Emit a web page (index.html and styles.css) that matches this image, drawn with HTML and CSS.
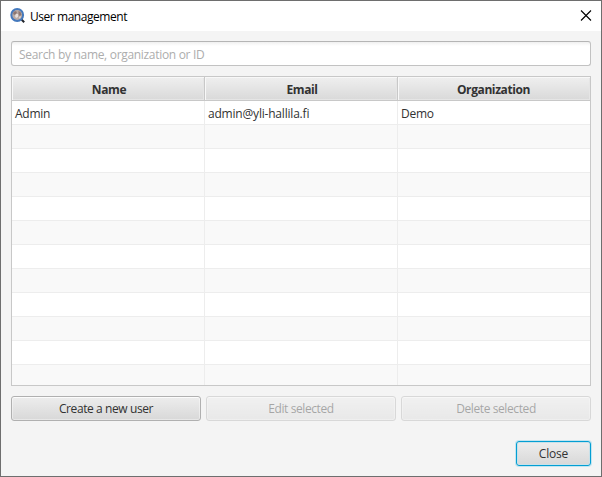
FILE: index.html
```html
<!DOCTYPE html>
<html lang="en">
<head>
<meta charset="utf-8">
<title>User management</title>
<link rel="stylesheet" href="styles.css">
</head>
<body>
<div class="window">
  <header class="titlebar">
    <svg class="app-icon" width="16" height="16" viewBox="0 0 16 16">
      <path d="M11.5 11.5l2.7 2.7" stroke="#20242b" stroke-width="2"/>
      <circle cx="7.2" cy="7" r="5.9" fill="#b9aaa5" stroke="#4479bd" stroke-width="2"/>
      <path d="M3 5l2-2 2 1-1 2-2 1zM8.500 3l2 1 1 3-2 1-1-2z" fill="#8d7772"/>
      <path d="M6 6l2 0 0 3-2 1-1-2zM9 9l2-1-1 3z" fill="#e6dfdc"/>
    </svg>
    <h1 class="title">User management</h1>
    <svg class="close-icon" width="12" height="12" viewBox="0 0 12 12"><path d="M1 .5l10 10M11 .5L1 10.500" stroke="#000" stroke-width="1.1"/></svg>
  </header>
  <main class="content">
    <div class="search">Search by name, organization or ID</div>
    <div class="table">
      <div class="row head"><div>Name</div><div>Email</div><div>Organization</div></div>
      <div class="row"><div>Admin</div><div class="mail">admin@yli-hallila.fi</div><div>Demo</div></div>
      <div class="row"><div></div><div></div><div></div></div>
      <div class="row"><div></div><div></div><div></div></div>
      <div class="row"><div></div><div></div><div></div></div>
      <div class="row"><div></div><div></div><div></div></div>
      <div class="row"><div></div><div></div><div></div></div>
      <div class="row"><div></div><div></div><div></div></div>
      <div class="row"><div></div><div></div><div></div></div>
      <div class="row"><div></div><div></div><div></div></div>
      <div class="row"><div></div><div></div><div></div></div>
      <div class="row"><div></div><div></div><div></div></div>
      <div class="row"><div></div><div></div><div></div></div>
    </div>
    <div class="actions">
      <button class="button">Create a new user</button>
      <button class="button" disabled>Edit selected</button>
      <button class="button" disabled>Delete selected</button>
    </div>
    <footer class="footer"><button class="button default">Close</button></footer>
  </main>
</div>
</body>
</html>
```
FILE: styles.css
```css
* { box-sizing: border-box; }
body { margin: 0; font: 12px/17px "Open Sans", "Noto Sans", sans-serif; letter-spacing: -0.25px; color: #323232; }
.window { width: 602px; height: 477px; border: 1px solid #6e6e6e; background: #f4f4f4; display: flex; flex-direction: column; overflow: hidden; }
.titlebar { height: 30px; flex: none; background: #fff; display: flex; align-items: flex-start; padding: 7px 9px 0; }
.title { margin: 0 auto 0 4px; font-size: 12px; font-weight: 400; letter-spacing: -0.45px; color: #000; }
.close-icon { margin-top: 2px; }
.content { padding: 10px; display: flex; flex-direction: column; }
.search { height: 25px; border: 1px solid #c2c2c2; border-top-color: #b5b5b5; border-radius: 3px; background: linear-gradient(#f0f0f0, #fff 4px); padding: 4px 7px 0; color: #adadad; letter-spacing: -0.31px; }
.table { margin-top: 10px; height: 310px; border: 1px solid #c8c8c8; overflow: hidden; background: #fff; }
.row { display: grid; grid-template-columns: repeat(3, 193px); height: 24px; background: #f9f9f9; }
.row:nth-child(even) { background: #fff; }
.row > div { border-right: 1px solid #ededed; border-bottom: 1px solid #ededed; padding: 4px 3px 0; white-space: nowrap; }
.row > div:last-child { border-right: 0; }
.row > .mail { letter-spacing: -0.2px; }
.head > div, .head > div:last-child { border-right: 1px solid #c8c8c8; border-bottom-color: #c8c8c8; background: linear-gradient(#efefef, #d9d9d9); box-shadow: inset 1px 1px #f8f8f8, inset -1px -1px #e5e5e5; padding-left: 5px; text-align: center; font-weight: 700; letter-spacing: -0.4px; }
.head > div:last-child { padding-left: 2px; }
.actions { margin-top: 10px; display: grid; grid-template-columns: repeat(3, 190px); gap: 5px; }
.button { height: 25px; padding: 0; border: 1px solid #b0b0b0; border-radius: 3px; background: linear-gradient(#ededed, #d8d8d8); box-shadow: inset 0 0 0 1px rgba(255,255,255,.4), inset 0 1px #fafafa; font: inherit; letter-spacing: -0.4px; color: #323232; }
.button:disabled { opacity: .4; }
.footer { margin-top: 20px; display: flex; justify-content: flex-end; }
.default { width: 75px; border-color: #039ed3; box-shadow: 0 0 0 1px #c2e5f0, inset 0 0 0 1px #c9e1e9; letter-spacing: -0.2px; }
```
